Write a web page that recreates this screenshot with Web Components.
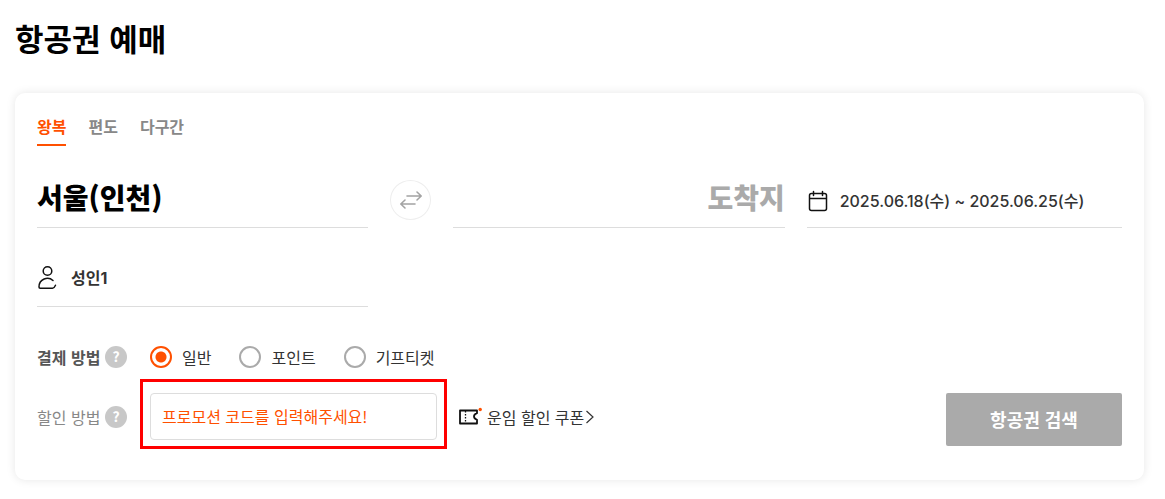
<!DOCTYPE html>
<html lang="ko">
<head>
<meta charset="utf-8">
<meta name="viewport" content="width=device-width, initial-scale=1">
<title>항공권 예매</title>
<style>
body{margin:0;background:#fff;color:#333;font:16px/24px "Noto Sans CJK KR",sans-serif}
</style>
</head>
<body>
<booking-page></booking-page>
<script>
const base = `<style>
*{box-sizing:border-box}
button{font:inherit;color:inherit;background:none;border:0;padding:0;margin:0;cursor:pointer}
svg{display:block;flex:none}
</style>`;
function define(name, html, setup) {
  const template = document.createElement('template');
  template.innerHTML = base + html;
  customElements.define(name, class extends HTMLElement {
    connectedCallback() {
      if (this.shadowRoot) return;
      const root = this.attachShadow({mode: 'open'});
      root.append(template.content.cloneNode(true));
      if (setup) setup(this, root);
    }
  });
}

define('trip-tabs', `<style>
:host{display:block}
div{display:flex;gap:22px}
button{height:32px;padding-bottom:6px;border-bottom:2px solid transparent;color:#888;font-weight:700}
button[aria-selected=true]{color:#ff5000;border-color:#ff5000}
</style>
<div role="tablist">
<button role="tab" aria-selected="true">왕복</button>
<button role="tab" aria-selected="false">편도</button>
<button role="tab" aria-selected="false">다구간</button>
</div>`, (host, root) => {
  const tabs = [...root.querySelectorAll('button')];
  tabs.forEach(t => t.onclick = () => tabs.forEach(o => o.setAttribute('aria-selected', String(o === t))));
});

define('booking-field', `<style>
:host{display:block;min-width:0;border-bottom:1px solid #ddd}
button{display:flex;align-items:center;width:100%;height:100%;text-align:left;font-weight:500;white-space:nowrap}
:host([large]) button{padding-bottom:4px;font-size:28px;line-height:40px;font-weight:900;color:#000}
:host([empty]) button{justify-content:flex-end;color:#aaa}
:host([strong]) button{font-weight:700}
</style><button><slot name="icon"></slot><slot></slot></button>`);

define('swap-button', `<style>
:host{display:block}
button{display:grid;place-items:center;width:41px;height:40px;border:1px solid #eee;border-radius:50%}
</style>
<button aria-label="출발지 도착지 바꾸기"><svg width="24" height="20" viewBox="0 0 24 20" fill="none" stroke="#a3a3a3" stroke-width="1.6" stroke-linecap="round" stroke-linejoin="round"><path d="M8 6h14M18 2l4.200 4-4.200 4M16 14H2M6 10l-4.200 4L6 18"/></svg></button>`);

define('help-button', `<style>
:host{display:block}
button{display:grid;place-items:center;width:22px;height:22px;border-radius:50%;background:#c8c8c8;color:#fff;font-size:14px;line-height:20px;font-weight:700;padding-bottom:2px}
</style><button aria-label="도움말">?</button>`);

define('option-row', `<style>
:host{display:grid;grid-template-columns:90px minmax(0,1fr);column-gap:23px;align-items:center}
.label{display:flex;align-items:center;justify-content:space-between;white-space:nowrap}
</style>
<div class="label"><slot name="label"></slot><help-button></help-button></div><slot></slot>`);

define('payment-options', `<style>
:host{display:block}
fieldset{display:flex;gap:28px;margin:0;padding:0;border:0}
label{display:flex;align-items:center;gap:10px;white-space:nowrap}
input{appearance:none;width:22px;height:22px;margin:0;border:2px solid #aaa;border-radius:50%;background:#fff}
input:checked{border-color:#ff5000;background:radial-gradient(circle,#ff5000 5px,#fff 6px)}
</style>
<fieldset aria-label="결제 방법">
<label><input type="radio" name="pay" checked>일반</label>
<label><input type="radio" name="pay">포인트</label>
<label><input type="radio" name="pay">기프티켓</label>
</fieldset>`);

define('promo-input', `<style>
:host{display:block;position:relative;width:287px}
:host::after{content:"";position:absolute;inset:-14px -10px -9px;border:3px solid #f00;pointer-events:none}
input{display:block;width:100%;height:47px;padding:0 11px 2px;border:1px solid #ddd;border-radius:4px;background:#fff;font:inherit;color:#333}
input::placeholder{color:#ff5000;opacity:1}
</style><input type="text" aria-label="프로모션 코드" placeholder="프로모션 코드를 입력해주세요!">`);

define('coupon-link', `<style>
:host{display:block}
a{display:flex;align-items:center;color:#333;text-decoration:none;white-space:nowrap}
.ticket{margin-right:4px}
.arrow{margin-left:1px}
</style>
<a href="#coupon"><svg class="ticket" width="24" height="20" viewBox="0 0 24 20"><path d="M1 3.500h17v2.700c-4 1.600-4 5 0 6.600v3.700H1z" fill="none" stroke="#111" stroke-width="1.800" stroke-linejoin="round"/><path d="M6.500 4v12" stroke="#111" stroke-width="1.300" stroke-dasharray="1.500 1.500"/><circle cx="21.200" cy="2.500" r="1.700" fill="#ff5000"/></svg>운임 할인 쿠폰<svg class="arrow" width="10" height="16" viewBox="0 0 10 16" fill="none" stroke="#333" stroke-width="1.200"><path d="m1.500 2 6.500 6-6.500 6"/></svg></a>`);

define('search-button', `<style>
:host{display:block}
button{width:176px;height:53px;padding-bottom:2px;border-radius:2px;background:#aaa;color:#fff;font-size:18px;font-weight:700}
</style><button><slot></slot></button>`);

define('booking-page', `<style>
:host{display:block;padding:14px 21px 19px 15px}
h1{margin:0 0 31px;font-size:31px;line-height:48px;font-weight:700;color:#000}
main{padding:21px 22px 34px;border-radius:10px;background:#fff;box-shadow:0 0 10px rgba(0,0,0,.1)}
.route{display:grid;grid-template-columns:minmax(0,331fr) 41px minmax(0,331fr) minmax(0,315fr);column-gap:22px;margin-top:24px}
.route booking-field{height:58px}
.route swap-button{margin-top:10px}
.route .guests{height:57px;margin-top:22px}
.date,.guests{font-family:Inter,"Noto Sans CJK KR",sans-serif}
.date{padding-top:5px}
.date svg{margin-right:11px}
.guests svg{margin-right:12px}
.pay{margin-top:38px}
.pay [slot]{color:#555;font-weight:700}
.discount [slot]{color:#888}
.bottom{display:flex;align-items:flex-start;justify-content:space-between;margin-top:24px}
.code{display:flex;align-items:center;gap:22px}
</style>
<h1>항공권 예매</h1>
<main>
<trip-tabs></trip-tabs>
<div class="route">
<booking-field large>서울(인천)</booking-field>
<swap-button></swap-button>
<booking-field large empty>도착지</booking-field>
<booking-field class="date"><svg slot="icon" width="22" height="22" viewBox="0 0 22 22" fill="none" stroke="#111" stroke-width="1.500" stroke-linecap="round"><rect x="2.500" y="3.500" width="17" height="17" rx="2"/><path d="M3 8.500h16M6.500 1.500v4M15.500 1.500v4"/></svg>2025.06.18(수) ~ 2025.06.25(수)</booking-field>
<booking-field class="guests" strong><svg slot="icon" width="22" height="26" viewBox="0 0 22 26" fill="none" stroke="#111" stroke-width="1.500" stroke-linecap="round" stroke-linejoin="round"><circle cx="10.500" cy="6" r="4.300"/><path d="M16 15.500c-5-4.500-14-1.500-14 6.500 0 .8.400 1.200 1.200 1.200h12.300c1.200 0 2.200-1.200 3-3"/></svg>성인1</booking-field>
</div>
<option-row class="pay"><span slot="label">결제 방법</span><payment-options></payment-options></option-row>
<div class="bottom">
<option-row class="discount"><span slot="label">할인 방법</span><div class="code"><promo-input></promo-input><coupon-link></coupon-link></div></option-row>
<search-button>항공권 검색</search-button>
</div>
</main>`);
</script>
</body>
</html>
